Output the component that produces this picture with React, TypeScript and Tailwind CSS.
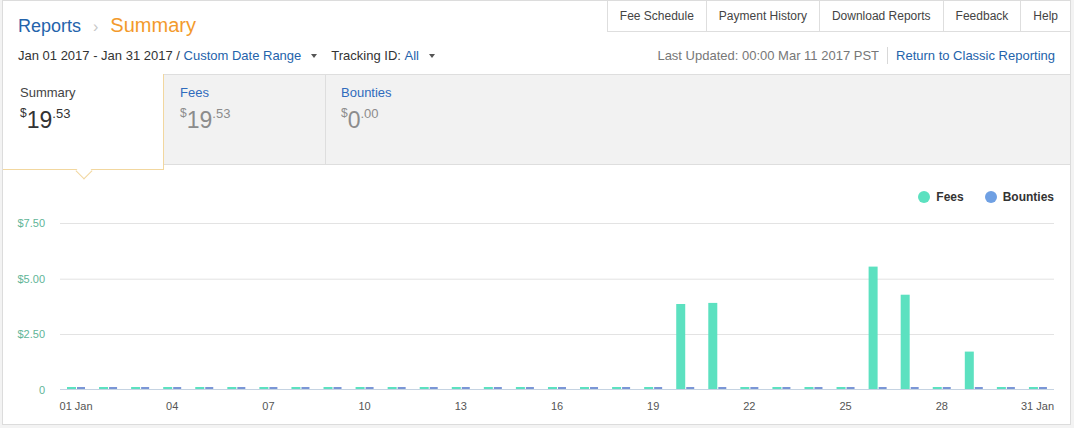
import React from "react";

const navItems = ["Fee Schedule", "Payment History", "Download Reports", "Feedback", "Help"];

// daily fees in dollars, 31 days of January
const fees = [
  0.01, 0.01, 0.01, 0.01, 0.01, 0.01, 0.01, 0.01, 0.01, 0.01, 0.01, 0.01, 0.01, 0.01, 0.01, 0.01,
  0.01, 0.01, 0.01, 3.84, 3.89, 0.01, 0.01, 0.01, 0.01, 5.53, 4.26, 0.01, 1.69, 0.01, 0.01,
];

const xLabels: Record<number, string> = {
  1: "01 Jan", 4: "04", 7: "07", 10: "10", 13: "13", 16: "16",
  19: "19", 22: "22", 25: "25", 28: "28", 31: "31 Jan",
};

const PLOT_LEFT = 60;
const PLOT_RIGHT = 1054;
const BASE_Y = 389;
const PX_PER_DOLLAR = 166 / 7.5;
const SLOT = (PLOT_RIGHT - PLOT_LEFT) / 31;

function Caret() {
  return <span className="ml-[10px] inline-block border-x-[3.5px] border-t-[4px] border-x-transparent border-t-[#555] align-middle" />;
}

function Amount({ whole, cents, dim }: { whole: string; cents: string; dim?: boolean }) {
  return (
    <div className={`flex items-start leading-none ${dim ? "text-[#8c8c8c]" : "text-[#333]"}`}>
      <span className="text-[12px] mt-[1px]">$</span>
      <span className="text-[23px] mt-[3px]">{whole}</span>
      <span className="text-[13px] mt-[1px]">.{cents}</span>
    </div>
  );
}

function Chart() {
  return (
    <svg width={1067} height={210} viewBox="3 213 1067 210" className="block">
      {[
        { v: "$7.50", y: 223 },
        { v: "$5.00", y: 278.7 },
        { v: "$2.50", y: 334 },
      ].map((g) => (
        <g key={g.v}>
          <line x1={PLOT_LEFT} x2={PLOT_RIGHT} y1={g.y + 0.5} y2={g.y + 0.5} stroke="#e3e3e3" />
          <text x={45} y={g.y + 4} textAnchor="end" fontSize={11} fill="#5fb597" fontFamily="'Liberation Sans', Arial, sans-serif">
            {g.v}
          </text>
        </g>
      ))}
      <text x={45} y={BASE_Y + 5} textAnchor="end" fontSize={11} fill="#5fb597" fontFamily="'Liberation Sans', Arial, sans-serif">
        0
      </text>
      {fees.map((f, i) => {
        const x0 = PLOT_LEFT + i * SLOT;
        const h = Math.max(2, f * PX_PER_DOLLAR);
        return (
          <g key={i}>
            <rect x={x0 + 7} y={BASE_Y - h} width={9} height={h} fill="#5ce1c0" />
            <rect x={x0 + 17} y={BASE_Y - 2} width={8} height={2} fill="#7a96d6" />
          </g>
        );
      })}
      <line x1={PLOT_LEFT} x2={PLOT_RIGHT} y1={BASE_Y + 0.5} y2={BASE_Y + 0.5} stroke="#c5d3e2" />
      {Object.entries(xLabels).map(([d, label]) => {
        const day = Number(d);
        const last = day === 31;
        const cx = last ? PLOT_RIGHT : PLOT_LEFT + (day - 0.5) * SLOT;
        return (
          <text
            key={d}
            x={cx}
            y={410}
            textAnchor={last ? "end" : "middle"}
            fontSize={11}
            fill="#555"
            fontFamily="'Liberation Sans', Arial, sans-serif"
          >
            {label}
          </text>
        );
      })}
    </svg>
  );
}

export default function App() {
  return (
    <div className="w-[1074px] h-[428px] bg-[#f3f3f3] font-['Liberation_Sans',Arial,sans-serif]">
      <div className="ml-[2px] w-[1069px] h-[425px] bg-white border border-[#dcdcdc] flex flex-col">
        {/* header */}
        <div className="flex justify-between items-start h-[36px]">
          <div className="flex items-baseline pl-[15px] pt-[9px]">
            <span className="text-[18px] text-[#2463ab]">Reports</span>
            <span className="mx-[12px] text-[16px] text-[#c8c8c8]">›</span>
            <span className="text-[20px] text-[#f39a2c]">Summary</span>
          </div>
          <div className="flex border-l border-b border-[#dedede] h-[31px] text-[12px] text-[#444]">
            {navItems.map((n, i) => (
              <div
                key={n}
                className={`flex items-center px-[12px] ${i < navItems.length - 1 ? "border-r border-[#dedede]" : ""}`}
              >
                {n}
              </div>
            ))}
          </div>
        </div>

        {/* filters */}
        <div className="flex justify-between items-center h-[37px] pl-[15px] pr-[15px] text-[13px]">
          <div className="flex items-center">
            <span className="text-[#333]">Jan 01 2017 - Jan 31 2017 /&nbsp;</span>
            <span className="text-[#2463ab]">Custom Date Range</span>
            <Caret />
            <span className="ml-[14px] text-[#333]">Tracking ID:&nbsp;</span>
            <span className="text-[#2463ab]">All</span>
            <Caret />
          </div>
          <div className="flex items-center">
            <span className="text-[#777]">Last Updated: 00:00 Mar 11 2017 PST</span>
            <span className="mx-[8px] w-px h-[17px] bg-[#d8d8d8]" />
            <span className="text-[#2463ab]">Return to Classic Reporting</span>
          </div>
        </div>

        {/* summary tabs */}
        <div className="flex h-[91px] bg-[#f2f2f2] border-t border-b border-[#dedede]">
          <div className="relative w-[161px] h-[96px] -mt-px bg-white border-r border-b border-[#f2d79f] pl-[17px] pt-[11px] z-10">
            <div className="text-[13px] text-[#444] leading-[16px]">Summary</div>
            <div className="mt-[5px]">
              <Amount whole="19" cents="53" />
            </div>
            <div className="absolute left-[75px] -bottom-[8px] w-[12px] h-[12px] rotate-45 bg-white border-r border-b border-[#f2d79f]" />
          </div>
          <div className="w-[162px] border-r border-[#dedede] pl-[16px] pt-[10px]">
            <div className="text-[13px] text-[#2f6bbd] leading-[16px]">Fees</div>
            <div className="mt-[5px]">
              <Amount whole="19" cents="53" dim />
            </div>
          </div>
          <div className="w-[162px] pl-[15px] pt-[10px]">
            <div className="text-[13px] text-[#2f6bbd] leading-[16px]">Bounties</div>
            <div className="mt-[5px]">
              <Amount whole="0" cents="00" dim />
            </div>
          </div>
        </div>

        {/* chart */}
        <div className="flex justify-end items-center h-[48px] pt-[16px] pr-[16px] text-[12px] font-bold text-[#333]">
          <span className="w-[12px] h-[12px] rounded-full bg-[#5ce1c0]" />
          <span className="ml-[6px]">Fees</span>
          <span className="ml-[21px] w-[12px] h-[12px] rounded-full bg-[#6fa0e3]" />
          <span className="ml-[6px]">Bounties</span>
        </div>
        <Chart />
      </div>
    </div>
  );
}
